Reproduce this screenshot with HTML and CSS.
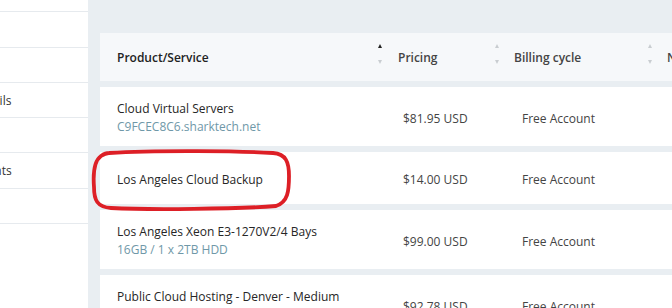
FILE: index.html
```html
<!DOCTYPE html>
<html lang="en">
<head>
    <meta charset="UTF-8">
    <meta name="viewport" content="width=device-width, initial-scale=1.0">
    <title>My Products &amp; Services</title>
    <link rel="stylesheet" href="styles.css">
</head>
<body>
    <div class="page">
        <aside class="sidebar">
            <ul class="side-list">
                <li>Home</li>
                <li>Overview</li>
                <li>Security</li>
                <li>Contact Details</li>
                <li>Users</li>
                <li>Email Accounts</li>
                <li>Emails</li>
            </ul>
        </aside>

        <main class="main">
            <div class="services">
                <div class="row head">
                    <div class="cell col-product">
                        <span>Product/Service</span>
                        <span class="sort asc"><i class="up"></i><i class="down"></i></span>
                    </div>
                    <div class="cell col-price">
                        <span>Pricing</span>
                        <span class="sort"><i class="up"></i><i class="down"></i></span>
                    </div>
                    <div class="cell col-cycle">
                        <span>Billing cycle</span>
                        <span class="sort"><i class="up"></i><i class="down"></i></span>
                    </div>
                    <div class="cell col-next">
                        <span>Next Due Date</span>
                    </div>
                </div>

                <div class="row">
                    <div class="cell col-product">
                        <div class="name">Cloud Virtual Servers</div>
                        <div class="sub">C9FCEC8C6.sharktech.net</div>
                    </div>
                    <div class="cell col-price">$81.95 USD</div>
                    <div class="cell col-cycle">Free Account</div>
                    <div class="cell col-next">-</div>
                </div>

                <div class="row">
                    <div class="cell col-product">
                        <div class="name">Los Angeles Cloud Backup</div>
                    </div>
                    <div class="cell col-price">$14.00 USD</div>
                    <div class="cell col-cycle">Free Account</div>
                    <div class="cell col-next">-</div>
                </div>

                <div class="row">
                    <div class="cell col-product">
                        <div class="name">Los Angeles Xeon E3-1270V2/4 Bays</div>
                        <div class="sub">16GB / 1 x 2TB HDD</div>
                    </div>
                    <div class="cell col-price">$99.00 USD</div>
                    <div class="cell col-cycle">Free Account</div>
                    <div class="cell col-next">-</div>
                </div>

                <div class="row">
                    <div class="cell col-product">
                        <div class="name">Public Cloud Hosting - Denver - Medium</div>
                        <div class="sub">denver-medium.sharktech.net</div>
                    </div>
                    <div class="cell col-price">$92.78 USD</div>
                    <div class="cell col-cycle">Free Account</div>
                    <div class="cell col-next">-</div>
                </div>
            </div>
        </main>
    </div>

    <!-- hand drawn marker around the backup row -->
    <svg class="marker" width="206" height="64" viewBox="0 0 206 64">
        <path d="M20 5 C70 2 150 3 184 5 C197 6 200 14 200 28 C200 43 199 54 187 58 C150 61 60 62 22 60 C8 59 5 52 5 39 C4 26 5 13 12 8 C15 6 17 5 20 5 Z"
              fill="none" stroke="#dd1f26" stroke-width="3.8" stroke-linejoin="round"/>
    </svg>
</body>
</html>
```

FILE: styles.css
```css
body {
    margin: 0;
    font-family: 'Open Sans', 'Noto Sans', sans-serif;
    font-size: 12px;
    color: #333;
    background: #e9eef2;
    overflow: hidden;
}
.page {
    display: flex;
    height: 308px;
}
.sidebar {
    width: 88px;
    flex-shrink: 0;
    background: white;
    overflow: hidden;
}
.side-list {
    list-style: none;
    margin: -23px 0 0 -73px;
    padding: 0;
}
.side-list li {
    height: 34.3px;
    line-height: 35px;
    border-bottom: 1px solid #e6eaee;
    white-space: nowrap;
}
.main {
    flex: 1;
    padding: 33px 0 0 12px;
    overflow: hidden;
}
.services {
    width: 640px;
    display: flex;
    flex-direction: column;
    gap: 6px;
}
.row {
    display: grid;
    grid-template-columns: 288px 117px 155px 80px;
    align-items: center;
    background: white;
    min-height: 52px;
    padding: 13px 0 10px;
    box-sizing: border-box;
}
.row.head {
    background: #f6f8fa;
    height: 48px;
    min-height: 0;
    padding: 0;
    font-weight: 600;
    color: #222;
}
.cell {
    white-space: nowrap;
}
.head .cell {
    display: flex;
    justify-content: space-between;
    align-items: center;
    height: 48px;
}
.head .col-product { padding: 0 6px 0 17px; }
.head .col-price { padding: 0 6px 0 10px; }
.head .col-cycle { padding: 0 8px 0 9px; }
.head .col-next { padding: 0 0 0 7px; }

.sort {
    display: flex;
    flex-direction: column;
    gap: 12px;
    margin-top: -7px;
}
.sort i {
    width: 0;
    height: 0;
    border-left: 2.5px solid transparent;
    border-right: 2.5px solid transparent;
}
.sort .up { border-bottom: 4px solid #c9cdd1; }
.sort .down { border-top: 4px solid #c9cdd1; }
.sort.asc .up { border-bottom-color: #222; }

.col-product { padding-left: 17px; }
.col-price { padding-left: 15px; color: #444; }
.col-cycle { padding-left: 17px; color: #444; }
.col-next { padding-left: 14px; color: #444; }

.name {
    line-height: 18px;
    color: #262626;
}
.sub {
    line-height: 18px;
    color: #6f98a8;
}
.marker {
    position: absolute;
    left: 89px;
    top: 148px;
}
```
